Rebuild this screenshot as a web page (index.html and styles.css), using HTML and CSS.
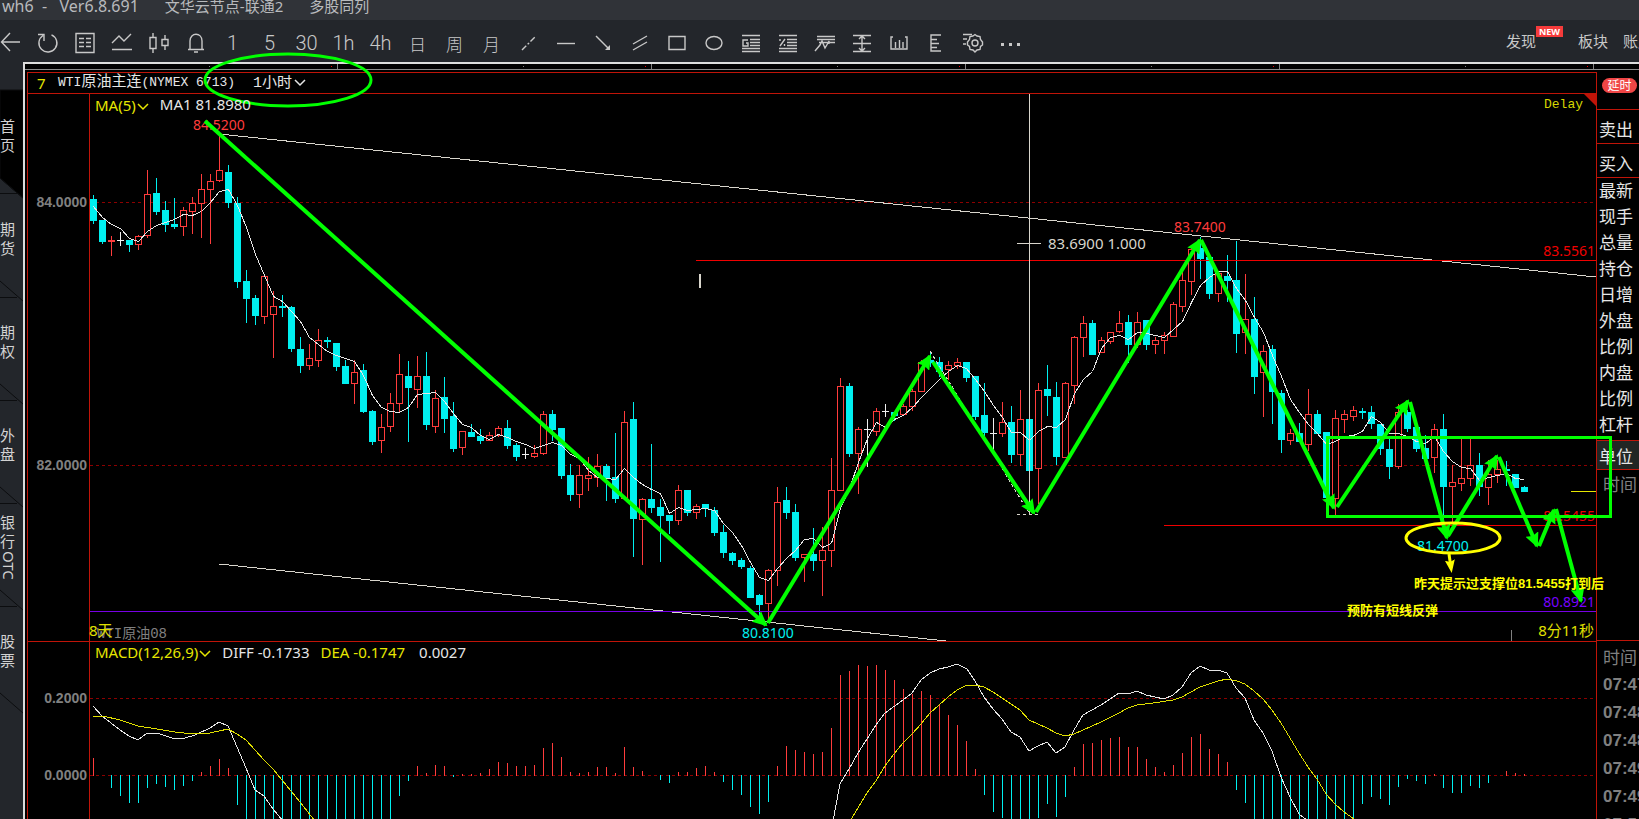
FILE: index.html
```html
<!DOCTYPE html>
<html lang="zh-CN">

<head>
    <meta charset="UTF-8">
    <meta name="viewport" content="width=device-width, initial-scale=1.0">
    <title>wh6 - WTI原油主连</title>
    <link rel="stylesheet" href="styles.css">
</head>

<body>
    <header class="titlebar">
        <span class="app">wh6&nbsp; -&nbsp; &nbsp;Ver6.8.691</span>
        <span class="node">文华云节点-联通2</span>
        <span>多股同列</span>
    </header>

    <!-- 工具栏 -->
    <div class="toolbar">
        <div class="tools">
            <button aria-label="返回"><svg viewBox="0 0 22 22"><path d="M20 10H2M10 1L1.500 10L10 19" /></svg></button>
            <button aria-label="刷新"><svg viewBox="0 0 22 22"><path d="M14.500 2.800A9 9 0 1 1 6 3.500M1 2.500H7V9" /></svg></button>
            <button aria-label="报价"><svg viewBox="0 0 22 22"><path d="M2 1.500H20V20.500H2ZM5 6.500H10M12 6.500H17M5 10.500H10M12 10.500H17M5 14.500H10M12 14.500H17" /></svg></button>
            <button aria-label="分时"><svg viewBox="0 0 22 22"><path d="M1 11L8 4L13 9L20 2M1 17.500H21" /></svg></button>
            <button aria-label="K线"><svg viewBox="0 0 22 22"><path d="M2 5.500H8V16.500H2ZM5 1V5.500M5 16.500V21M14 7.500H20V13.500H14ZM17 3V7.500M17 13.500V18" /></svg></button>
            <button aria-label="预警"><svg viewBox="0 0 22 22"><path d="M3 17.500H19M5 17V9C5 0 17 0 17 9V17M9 20H13" /></svg></button>
            <button>1</button>
            <button>5</button>
            <button>30</button>
            <button>1h</button>
            <button>4h</button>
            <button class="cjk">日</button>
            <button class="cjk">周</button>
            <button class="cjk">月</button>
            <button aria-label="虚线"><svg viewBox="0 0 22 22"><path d="M4 18L18 4" stroke-dasharray="6 2 2 2" /></svg></button>
            <button aria-label="直线"><svg viewBox="0 0 22 22"><path d="M2 11.500H20" /></svg></button>
            <button aria-label="箭头"><svg viewBox="0 0 22 22"><path d="M4 4L16 16" /><path class="solid" d="M18 18H13L18 13Z" /></svg></button>
            <button aria-label="平行线"><svg viewBox="0 0 22 22"><path d="M4 12L18 4M4 18L18 10" /></svg></button>
            <button aria-label="矩形"><svg viewBox="0 0 22 22"><path d="M3 4.500H19V17.500H3Z" /></svg></button>
            <button aria-label="椭圆"><svg viewBox="0 0 22 22"><ellipse cx="11" cy="11" rx="8" ry="6.500" /></svg></button>
            <button aria-label="黄金分割"><svg viewBox="0 0 22 22"><path d="M2 3.500H20M10 7.500H20M10 10.500H20M10 13.500H20M2 16.500H20M2 19.500H20M8 8H3V14H8V11H6" /></svg></button>
            <button aria-label="百分比"><svg viewBox="0 0 22 22"><path d="M2 3.500H20M10 7.500H20M10 10.500H20M10 13.500H20M2 16.500H20M2 19.500H20M3 14L8 7M3 7V9M7.500 12V14" /></svg></button>
            <button aria-label="波浪"><svg viewBox="0 0 22 22"><path d="M3 4.500H21M3 7.500H21M5 10.500H21M1 19L6 13L8 9L11 16L14 11L15 9V12" /></svg></button>
            <button aria-label="测量"><svg viewBox="0 0 22 22"><path d="M2 3.500H20M2 11.500H20M2 19.500H20M11 4V19M8 7L11 4L14 7M8 16L11 19L14 16" /></svg></button>
            <button aria-label="周期尺"><svg viewBox="0 0 22 22"><path d="M5 5H3V17H19V5H17M7.500 10V16M11.500 8V16M15 10V16" /></svg></button>
            <button aria-label="价格尺"><svg viewBox="0 0 22 22"><path d="M16 3H6V19H16M6 7.500H12M6 11.500H14M6 15.500H12" /></svg></button>
            <button aria-label="设置"><svg viewBox="0 0 22 22"><path d="M1 2.500H10M1 7H5M1 12H4" /><path d="M11 4L13 2.500L15 4L18 4.500L18.500 7.500L20.500 10L20.500 13L18.500 14.500L18 17.500L15 18L13 20L11 18L8 17.500L7.500 14.500L5.500 13V10L7.500 7.500L8 4.500Z" /><circle cx="13" cy="11" r="3" /></svg></button>
            <button aria-label="更多"><svg viewBox="0 0 22 22"><path class="solid" d="M2 11H5V14H2ZM10 11H13V14H10ZM18 11H21V14H18Z" /></svg></button>
        </div>
        <div class="links">
            <a href="#">发现<sup class="new">NEW</sup></a>
            <a href="#">板块</a>
            <a href="#">账户</a>
        </div>
    </div>

    <div class="workspace">
        <!-- 左侧板块导航 -->
        <nav class="sidenav">
            <svg class="tabs" aria-hidden="true">
                <path class="active" d="M0 28H23V136L0 116Z" />
                <path d="M0 131.500H17M0 116L23 136M0 235.500H17M0 219L23 239M0 338.500H17M0 322L23 342M0 441.500H17M0 425L23 445M0 544.500H17M0 528L23 548M0 631L23 651" />
            </svg>
            <a href="#"><span>首</span><span>页</span></a>
            <a href="#"><span>期</span><span>货</span></a>
            <a href="#"><span>期</span><span>权</span></a>
            <a href="#"><span>外</span><span>盘</span></a>
            <a href="#"><span>银</span><span>行</span><span class="otc">OTC</span></a>
            <a href="#"><span>股</span><span>票</span></a>
        </nav>

        <main class="window">
            <svg class="ruler" id="ruler" aria-hidden="true"></svg>
            <div class="columns">
                <section class="chart">
                    <div class="chart-head">
                        <b>7</b>
                        <span class="contract">WTI<span>原油主连</span>(NYMEX 6713)</span>
                        <label class="period">
                            <select aria-label="周期">
                                <option>1小时</option>
                                <option>4小时</option>
                            </select>
                            <svg class="chevron" viewBox="0 0 12 8"><path d="M1 1L6 6L11 1" /></svg>
                        </label>
                    </div>
                    <div class="pane price">
                        <div class="legend">
                            <button>MA(5)<svg class="chevron" viewBox="0 0 12 8"><path d="M1 1L6 6L11 1" /></svg></button>
                            <span>MA1 81.8980</span>
                            <span class="delay">Delay</span>
                        </div>
                        <svg class="plot" id="price"></svg>
                    </div>
                    <div class="pane macd">
                        <div class="legend">
                            <button>MACD(12,26,9)<svg class="chevron" viewBox="0 0 12 8"><path d="M1 1L6 6L11 1" /></svg></button>
                            <span>DIFF -0.1733</span>
                            <span class="dea">DEA -0.1747</span>
                            <span class="bar">0.0027</span>
                        </div>
                        <svg class="plot" id="macd"></svg>
                    </div>
                </section>

                <!-- 右侧报价 -->
                <aside class="quote">
                    <div class="tag"><span>延时</span></div>
                    <div class="side">卖出</div>
                    <div class="side">买入</div>
                    <ul class="fields">
                        <li>最新</li>
                        <li>现手</li>
                        <li>总量</li>
                        <li>持仓</li>
                        <li>日增</li>
                        <li>外盘</li>
                        <li>比例</li>
                        <li>内盘</li>
                        <li>比例</li>
                        <li>杠杆</li>
                    </ul>
                    <div class="unit">单位</div>
                    <div class="clock">时间</div>
                    <ul class="ticks">
                        <li class="caption">时间</li>
                        <li>07:47</li>
                        <li>07:48</li>
                        <li>07:48</li>
                        <li>07:49</li>
                        <li>07:49</li>
                        <li>07:50</li>
                    </ul>
                </aside>
            </div>
        </main>
    </div>

    <!-- 手绘标注 -->
    <svg class="notes">
        <defs>
            <marker id="green-head" markerUnits="userSpaceOnUse" markerWidth="15" markerHeight="14" refX="13" refY="7" orient="auto">
                <path d="M0 0L15 7L0 14L2 7Z" fill="#00ff00" />
            </marker>
            <marker id="yellow-head" markerUnits="userSpaceOnUse" markerWidth="14" markerHeight="12" refX="8" refY="5" orient="auto">
                <path d="M0 0L13 5L0 10L2 5Z" fill="#ffff00" />
            </marker>
        </defs>
        <ellipse class="green" cx="288" cy="80" rx="83" ry="26" />
        <g id="waves"></g>
        <rect class="green" x="1327.5" y="437.5" width="283" height="79" />
        <ellipse class="yellow" cx="1453" cy="538" rx="47" ry="15" />
        <path class="yellow" d="M1449 554L1451 568" marker-end="url(#yellow-head)" />
        <text x="1414" y="588">昨天提示过支撑位<tspan class="num">81.5455</tspan>打到后</text>
        <text x="1347" y="615">预防有短线反弹</text>
    </svg>

    <script src="chart.js"></script>
</body>

</html>
```

FILE: styles.css
```css
* {
    box-sizing: border-box;
}

body {
    margin: 0;
    height: 100vh;
    display: flex;
    flex-direction: column;
    overflow: hidden;
    background-color: #000;
    color: #e6e6e6;
    font-family: "Noto Sans", "Noto Sans CJK SC", sans-serif;
    font-size: 14px;
}

button {
    padding: 0;
    border: none;
    background: none;
    color: inherit;
    font: inherit;
    cursor: pointer;
}

a {
    color: inherit;
    text-decoration: none;
}

ul {
    margin: 0;
    padding: 0;
    list-style: none;
}

/* 标题栏 */
.titlebar {
    flex: none;
    height: 20px;
    padding-left: 2px;
    display: flex;
    gap: 26px;
    background-color: #303338;
    color: #b8babd;
    font-size: 15px;
    line-height: 12px;
    white-space: nowrap;
}

.app {
    font-size: 16px;
}

/* 工具栏 */
.toolbar {
    flex: none;
    height: 42px;
    display: flex;
    justify-content: space-between;
    background-color: #23262b;
    color: #c8c8c8;
    overflow: hidden;
}

.tools {
    display: flex;
    margin-left: -8px;
}

.tools button {
    width: 37px;
    height: 46px;
    display: flex;
    align-items: center;
    justify-content: center;
    font-family: Roboto, sans-serif;
    font-size: 20px;
    font-weight: 300;
}

.tools button.cjk {
    font-family: "Noto Sans CJK SC", sans-serif;
    font-size: 17px;
}

.tools svg {
    width: 22px;
    height: 22px;
    fill: none;
    stroke: #c8c8c8;
    stroke-width: 1.4;
}

.tools .solid {
    fill: #c8c8c8;
    stroke: none;
}

.links {
    display: flex;
    gap: 15px;
    margin-right: -14px;
    font-size: 15px;
    line-height: 42px;
    white-space: nowrap;
}

.links a {
    display: flex;
}

.new {
    height: 11px;
    margin-top: 6px;
    padding: 0 3px;
    background-color: #f53b3b;
    color: #fff;
    font-size: 9px;
    font-weight: bold;
    line-height: 11px;
}

.workspace {
    flex: 1;
    min-height: 0;
    display: flex;
}

/* 左侧导航 */
.sidenav {
    position: relative;
    flex: none;
    width: 23px;
    padding-top: 28px;
    background-color: #23262b;
    color: #d2d2d2;
    font-size: 15px;
    line-height: 19px;
}

.sidenav a {
    position: relative;
    height: 103px;
    padding-bottom: 11px;
    display: flex;
    flex-direction: column;
    justify-content: center;
}

.sidenav .otc {
    height: 32px;
    line-height: 18px;
    writing-mode: vertical-rl;
    align-self: flex-start;
}

.tabs {
    position: absolute;
    inset: 0;
    width: 100%;
    height: 100%;
    fill: none;
    stroke: #0c0d0f;
}

.tabs .active {
    fill: #000;
}

/* 图表窗口 */
.window {
    flex: 1;
    min-width: 0;
    display: flex;
    flex-direction: column;
    border-top: 2px solid #dcdcdc;
    border-left: 2px solid #dcdcdc;
}

.ruler {
    display: block;
    width: 100%;
    height: 6px;
    margin-bottom: 2px;
    border-bottom: 1px solid #8c8c8c;
}

.columns {
    flex: 1;
    min-height: 0;
    display: flex;
    padding-left: 2px;
}

.chart {
    flex: 1;
    min-width: 0;
    display: flex;
    flex-direction: column;
    border: 1px solid #c01408;
    border-bottom: none;
}

.chart-head {
    flex: none;
    height: 21px;
    padding-left: 9px;
    display: flex;
    align-items: center;
    border-bottom: 1px solid #c01408;
    font-family: "Liberation Mono", "Noto Sans CJK SC", monospace;
    font-size: 13px;
    line-height: 18px;
    white-space: nowrap;
}

.chart-head b {
    width: 21px;
    color: #e6e600;
    font-family: "Noto Sans", sans-serif;
    font-size: 15px;
    font-weight: normal;
}

.contract span {
    font-size: 15px;
}

.period {
    display: flex;
    align-items: center;
    margin-left: 18px;
}

.period select {
    width: 41px;
    height: 20px;
    padding: 0;
    border: none;
    appearance: none;
    background: none;
    color: inherit;
    font-family: "Liberation Mono", "Noto Sans CJK SC", monospace;
    font-size: 15px;
}

.chevron {
    width: 12px;
    height: 8px;
    fill: none;
    stroke: currentColor;
    stroke-width: 1.5;
}

.pane {
    position: relative;
    min-height: 0;
    overflow: hidden;
}

.price {
    flex: 547 1 0;
    border-bottom: 1px solid #c01408;
}

.macd {
    flex: 177 1 0;
}

.plot {
    position: absolute;
    top: 0;
    left: 0;
    width: 100%;
    height: 100%;
}

.legend {
    position: relative;
    z-index: 1;
    display: flex;
    gap: 11px;
    padding-left: 67px;
    font-size: 15px;
    line-height: 20px;
    white-space: nowrap;
}

.legend button {
    display: flex;
    align-items: center;
    gap: 1px;
    color: #e6e600;
}

.legend .chevron {
    margin-top: 3px;
}

.legend .dea {
    color: #e6e600;
}

.legend .bar {
    margin-left: 3px;
}

.legend .delay {
    margin-left: auto;
    padding-right: 13px;
    color: #d7d700;
    font-family: "Liberation Mono", monospace;
    font-size: 13px;
    line-height: 22px;
}

/* 曲线与K线 */
.crisp {
    shape-rendering: crispEdges;
}

.up {
    fill: #000;
    stroke: #ff3c3c;
}

.down {
    fill: #00f0f0;
    stroke: #00f0f0;
}

.flat {
    fill: none;
    stroke: #f0f0f0;
}

.line {
    fill: none;
    stroke: #e6e6e6;
}

.line.yellow-line {
    stroke: #e0e000;
}

.grid {
    stroke: #8c0000;
    stroke-dasharray: 3 3;
}

.frame {
    stroke: #c01408;
}

.trend {
    stroke: #d8d5cc;
}

.dashed {
    fill: none;
    stroke: #d8d5cc;
    stroke-dasharray: 3 3;
}

.level {
    stroke: #f00000;
}

.support {
    stroke: #7800e6;
}

.last {
    stroke: #e6e600;
}

.mark {
    stroke: #808080;
}

.plot text {
    font-size: 14px;
}

.plot .axis {
    fill: #808080;
    font-family: "Liberation Sans", sans-serif;
    font-weight: bold;
    text-anchor: end;
}

.plot .end {
    text-anchor: end;
}

.plot .red {
    fill: #ff3c3c;
}

.plot .cyan {
    fill: #00f0f0;
}

.plot .pale {
    fill: #d8d5cc;
    font-size: 15px;
}

.plot .bright {
    fill: #f00000;
}

.plot .purple {
    fill: #7800ff;
}

.plot .gold {
    fill: #e0e000;
    font-size: 15px;
}

.plot .gray {
    fill: #808080;
    font-family: "Liberation Mono", "Noto Sans CJK SC", monospace;
    font-size: 14px;
}

/* 右侧报价 */
.quote {
    flex: none;
    width: 42px;
    display: flex;
    flex-direction: column;
    overflow: hidden;
    font-size: 17px;
    line-height: 26px;
    white-space: nowrap;
}

.quote > * {
    padding-left: 2px;
}

.tag {
    flex: none;
    height: 38px;
    padding-top: 6px;
    border-bottom: 1px solid #c01408;
}

.quote .tag {
    padding-left: 5px;
}

.tag span {
    display: block;
    width: 35px;
    height: 15px;
    border-radius: 8px;
    background-color: #f04646;
    color: #fff;
    font-size: 12px;
    line-height: 15px;
    text-align: center;
}

.side {
    flex: none;
    height: 34px;
    padding-top: 7px;
    border-bottom: 1px solid #c01408;
}

.fields {
    padding-bottom: 2px;
}

.unit {
    flex: none;
    height: 30px;
    padding-top: 3px;
    border-top: 1px solid #c01408;
    border-bottom: 1px solid #c01408;
    background-color: #222624;
}

.clock,
.ticks {
    color: #808080;
}

.quote .clock,
.quote .ticks {
    padding-left: 6px;
}

.clock {
    flex: 1;
    padding-top: 2px;
    border-bottom: 1px solid #c01408;
}

.ticks {
    flex: none;
    height: 178px;
    padding-top: 2px;
    overflow: hidden;
    font-family: "Liberation Sans", sans-serif;
    font-size: 17px;
    font-weight: bold;
    line-height: 28px;
}

.ticks .caption {
    font-family: "Noto Sans CJK SC", sans-serif;
    font-weight: normal;
}

/* 标注层 */
.notes {
    position: absolute;
    inset: 0;
    width: 100%;
    height: 100%;
    pointer-events: none;
}

.notes .green,
.notes .yellow {
    fill: none;
    stroke: #00ff00;
    stroke-width: 3;
}

.notes .wave {
    stroke: #00ff00;
    stroke-width: 4;
}

.notes .yellow {
    stroke: #ffff00;
}

.notes text {
    fill: #ffff00;
    font-family: "Noto Sans CJK SC", sans-serif;
    font-size: 13px;
    font-weight: bold;
}

.notes .num {
    font-family: "Liberation Sans", sans-serif;
}
```

FILE: chart.js
```js
// K线: [类型, 最高, 实体上沿, 实体下沿, 最低]  u=阳线 d=阴线 f=十字
const candles = [
    ["d",195,199,221,224], ["d",220,220,242,244], ["u",236,240,242,256], ["f",232,240,240,246], ["d",240,240,245,252],
    ["u",235,236,245,250], ["u",170,194,236,238], ["d",178,193,212,215], ["d",201,210,225,232], ["d",198,224,227,229],
    ["u",207,210,227,236], ["u",197,203,212,234], ["u",174,189,204,238], ["u",174,181,190,244], ["u",134,170,181,182],
    ["d",165,172,203,208], ["d",197,203,282,288], ["d",270,281,299,323], ["d",295,298,316,325], ["u",276,276,317,324],
    ["u",291,306,315,358], ["d",295,306,308,317], ["d",306,307,349,352], ["d",337,349,366,373], ["u",344,358,366,370],
    ["u",329,340,361,367], ["d",337,340,342,348], ["d",343,343,367,371], ["d",360,366,384,384], ["u",360,372,384,404],
    ["d",364,370,412,413], ["d",410,411,442,445], ["u",414,427,441,453], ["u",393,403,427,432], ["u",354,374,404,412],
    ["d",361,376,388,442], ["u",356,376,390,408], ["d",352,376,425,430], ["u",390,398,427,433], ["d",377,397,419,433],
    ["d",402,416,449,452], ["u",431,431,448,455], ["d",424,432,437,437], ["d",429,436,441,444], ["u",432,435,441,441],
    ["u",426,428,436,437], ["d",420,428,446,449], ["d",443,445,457,461], ["f",448,454,454,459], ["u",445,453,457,458],
    ["u",411,414,454,455], ["d",410,414,430,441], ["d",428,428,476,479], ["d",464,475,495,501], ["u",465,475,495,508],
    ["u",457,475,479,491], ["u",454,466,478,487], ["d",464,466,479,501], ["d",433,477,499,503], ["u",411,422,499,499],
    ["d",402,419,519,557], ["u",498,499,520,565], ["d",444,499,508,513], ["d",499,507,516,562], ["d",515,515,521,534],
    ["u",485,490,521,525], ["d",490,490,513,516], ["u",504,506,513,519], ["d",504,504,509,517], ["d",507,510,533,536],
    ["d",525,532,553,558], ["d",552,553,561,565], ["d",558,560,567,569], ["d",566,568,598,598], ["d",594,595,605,615],
    ["u",569,570,604,622], ["u",487,502,571,586], ["d",487,500,513,519], ["d",504,512,558,561], ["u",554,554,558,582],
    ["d",528,554,561,571], ["u",527,550,561,596], ["u",458,490,551,567], ["u",378,386,491,491], ["d",383,386,454,457],
    ["u",427,429,454,494], ["f",419,429,429,467], ["u",408,411,432,436], ["f",404,411,411,417], ["d",412,412,416,421],
    ["u",404,406,415,415], ["u",389,391,407,411], ["u",360,362,392,392], ["d",351,360,363,367], ["d",357,362,372,377],
    ["u",361,365,370,380], ["u",358,362,366,369], ["d",362,362,378,382], ["d",376,376,417,420], ["d",383,415,433,437],
    ["f",418,433,433,455], ["u",402,422,434,437], ["d",406,422,455,463], ["u",390,419,455,466], ["d",419,419,471,510],
    ["u",383,390,469,504], ["d",365,389,396,416], ["d",382,397,457,465], ["u",382,383,458,458], ["u",336,337,386,404],
    ["u",316,323,338,357], ["d",320,323,355,355], ["u",337,340,353,353], ["u",332,332,342,344], ["u",311,323,332,333],
    ["d",315,322,345,363], ["u",312,322,345,348], ["d",320,320,345,350], ["u",337,340,345,354], ["u",332,335,341,354],
    ["u",302,304,337,337], ["u",272,280,307,312], ["u",247,249,282,295], ["d",237,248,259,279], ["d",257,257,294,299],
    ["u",273,273,294,302], ["d",255,276,281,302], ["d",241,280,334,353], ["u",274,319,333,354], ["d",297,319,377,394],
    ["u",345,351,373,417], ["d",345,349,392,424], ["d",390,393,440,453], ["u",429,433,441,445], ["d",423,433,442,442],
    ["u",389,414,445,451], ["d",410,414,434,434], ["d",432,432,498,498], ["u",410,418,499,515], ["u",410,414,420,433],
    ["u",406,410,417,421], ["d",408,411,413,419], ["d",406,412,424,429], ["d",424,424,449,455], ["d",438,449,467,479],
    ["u",404,412,467,469], ["d",410,412,429,432], ["d",427,427,449,452], ["d",435,448,459,459], ["u",424,429,458,473],
    ["d",414,429,487,533], ["u",465,482,487,522], ["u",438,478,484,491], ["u",438,465,479,486], ["d",453,465,487,496],
    ["u",460,474,488,505], ["u",460,469,475,483], ["d",461,469,471,486], ["d",474,474,488,488], ["d",486,487,492,492]
];

// MACD 柱
const bars = [
    17, 0, -12, -20, -27, -27, -12, -8, -11, -14, -10, -5, 3, 9, 16, 7, -29, -50, -50, -50,
    -50, -50, -50, -50, -50, -50, -50, -50, -50, -50, -50, -50, -50, -50, -20, -5, 9, 2, 10, 9,
    -1, 1, 1, 2, 6, 13, 12, 9, 9, 10, 27, 32, 18, 3, 2, 3, 8, 8, 2, 28,
    8, 4, 0, -4, -7, 3, 3, 7, 9, 3, -6, -14, -19, -31, -38, -26, 9, 29, 25, 23,
    21, 23, 47, 100, 104, 110, 109, 110, 105, 95, 86, 81, 84, 80, 71, 60, 50, 34, 6, -19,
    -36, -42, -50, -50, -50, -42, -28, -41, -21, 8, 31, 32, 35, 37, 38, 28, 28, 16, 8, 3,
    10, 22, 38, 41, 26, 21, 13, -14, -27, -50, -50, -50, -50, -50, -50, -50, -50, -50, -50, -50,
    -50, -28, -21, -23, -29, -11, -3, -5, -8, 1, -12, -17, -17, -10, -12, -7, 0, 4, 2, 1
];

const diff = [
    "93,706 102,716 111,723 120,730 129,736 138,740 147,733 157,733 175,739 185,738 195,735 210,728 219,722 228,726 237,747 246,768 255,790 264,796 273,809 283,821",
    "833,821 840,784 849,769 858,753 867,739 876,725 885,713 903,700 912,693 921,680 930,673 939,669 948,667 957,664 967,669 975,681 984,697 993,709 1002,719 1011,732 1020,737 1029,751 1038,746 1047,742 1056,753 1065,747 1074,730 1083,715 1092,710 1101,705 1110,699 1119,693 1128,694 1137,691 1146,695 1155,697 1164,699 1173,695 1182,687 1191,673 1200,666 1209,670 1218,670 1227,673 1236,688 1245,698 1254,720 1263,733 1272,751 1281,777 1290,797 1299,814 1308,821"
];

const dea = [
    "93,716 103,716 120,720 129,723 138,726 157,729 175,732 193,734 210,733 228,729 237,734 246,740 255,750 264,760 273,769 282,780 291,791 300,802 315,821",
    "850,821 867,793 876,781 885,766 894,754 903,743 912,734 921,724 930,713 939,705 948,697 957,690 967,685 975,685 984,687 993,692 1002,698 1011,704 1020,710 1029,720 1038,724 1047,728 1056,733 1065,736 1074,734 1083,730 1101,722 1119,713 1128,708 1137,705 1153,703 1173,700 1182,697 1191,692 1200,687 1209,684 1218,681 1227,679 1237,681 1245,684 1254,691 1263,699 1272,710 1281,723 1290,738 1299,753 1308,767 1317,779 1326,794 1335,804 1344,812 1357,821"
];

// 标注箭头
const waves = [
    [205,121,766,625], [768,623,930,356], [933,362,1034,513], [1036,512,1200,240], [1201,240,1334,508], [1337,507,1408,401],
    [1410,402,1447,538], [1448,536,1497,456], [1499,457,1537,546], [1539,546,1554,510], [1556,509,1581,601]
];

const STEP = 9;
const FIRST = 93;
const RIGHT = 1596;

function xAt(i) {
    return FIRST + i * STEP;
}

function line(cls, x1, y1, x2, y2) {
    return `<path class="${cls}" d="M${x1} ${y1}L${x2} ${y2}"/>`;
}

function hline(cls, x1, x2, y) {
    return line(cls + " crisp", x1, y + 0.5, x2, y + 0.5);
}

function vline(cls, x, y1, y2) {
    return line(cls + " crisp", x + 0.5, y1, x + 0.5, y2);
}

function label(cls, x, y, text) {
    return `<text class="${cls}" x="${x}" y="${y}">${text}</text>`;
}

function drawCandle([type, high, top, bottom, low], i) {
    const x = xAt(i);
    const cls = { u: "up", d: "down", f: "flat" }[type];
    let out = vline(cls, x, high, low);
    if (type === "f") {
        return out + hline(cls, x - 3, x + 4, top);
    }
    out += `<rect class="${cls} crisp" x="${x - 2.5}" y="${top + 0.5}" width="6" height="${bottom - top - 1}"/>`;
    return out;
}

// 五周期均线，前四根没有足够的数据
function movingAverage() {
    const close = candles.map(c => c[0] === "d" ? c[3] : c[2]);
    const points = [206, 217, 224, 228];
    for (let i = 4; i < close.length; i++) {
        points.push((close[i] + close[i - 1] + close[i - 2] + close[i - 3] + close[i - 4]) / 5);
    }
    return points.map((y, i) => `${xAt(i) + 0.5},${Math.round(y) + 0.5}`).join(" ");
}

function drawPrice() {
    document.getElementById("price").innerHTML = `<g transform="translate(-28 -94)">
        ${vline("frame", 89, 94, 641)}
        ${hline("grid", 90, RIGHT, 202)}
        ${hline("grid", 90, RIGHT, 465)}
        ${candles.map(drawCandle).join("")}
        <polyline class="line crisp" points="${movingAverage()}"/>
        ${line("trend crisp", 219, 134, RIGHT, 277)}
        ${line("trend crisp", 219, 564, 946, 641)}
        ${hline("level", 696, RIGHT, 260)}
        ${hline("level", 1164, RIGHT, 525)}
        ${hline("support", 90, RIGHT, 611)}
        ${hline("last", 1571, RIGHT, 491)}
        ${vline("trend", 1029, 93, 514)}
        ${hline("trend", 1017, 1041, 243)}
        <path class="dashed crisp" d="M930 351L985 440L1029 513M1017 514.500H1038"/>
        ${vline("mark", 1511, 630, 641)}
        <path class="trend" d="M700 274V288" stroke-width="2"/>
        <path fill="#c01408" d="M1584 94H1596V106Z"/>
        ${label("axis", 87, 207, "84.0000")}
        ${label("axis", 87, 470, "82.0000")}
        ${label("red", 193, 130, "84.5200")}
        ${label("red", 1174, 232, "83.7400")}
        ${label("pale", 1048, 249, "83.6900 1.000")}
        ${label("cyan", 742, 638, "80.8100")}
        ${label("cyan", 1417, 551, "81.4700")}
        ${label("bright end", 1595, 256, "83.5561")}
        ${label("bright end", 1595, 521, "81.5455")}
        ${label("purple end", 1595, 607, "80.8921")}
        ${label("gold end", 1594, 636, "8分11秒")}
        ${label("gray", 97, 638, "WTI原油08")}
        ${label("gold", 89, 636, "8天")}
    </g>`;
}

function drawMacd() {
    const zero = 775;
    const sticks = bars.map((h, i) => {
        if (h === 0) return "";
        return h > 0 ? vline("up", xAt(i), zero - h, zero + 1) : vline("down", xAt(i), zero, zero - h + 1);
    });
    document.getElementById("macd").innerHTML = `<g transform="translate(-28 -642)">
        ${vline("frame", 89, 642, 820)}
        ${hline("grid", 90, RIGHT, 698)}
        ${hline("grid", 90, RIGHT, zero)}
        ${sticks.join("")}
        ${diff.map(p => `<polyline class="line crisp" points="${p}"/>`).join("")}
        ${dea.map(p => `<polyline class="line yellow-line crisp" points="${p}"/>`).join("")}
        ${label("axis", 87, 703, "0.2000")}
        ${label("axis", 87, 780, "0.0000")}
    </g>`;
}

function drawRuler() {
    let out = "";
    for (let x = 312; x < 1600; x += 314) {
        out += vline("mark", x, 0, 5) + vline("level", x - 6, 2, 3) + vline("mark", x - 128, 2, 3);
    }
    document.getElementById("ruler").innerHTML = out;
}

function drawWaves() {
    document.getElementById("waves").innerHTML = waves.map(([x1, y1, x2, y2]) =>
        `<path class="wave" d="M${x1} ${y1}L${x2} ${y2}" marker-end="url(#green-head)"/>`
    ).join("");
}

drawPrice();
drawMacd();
drawRuler();
drawWaves();
```
